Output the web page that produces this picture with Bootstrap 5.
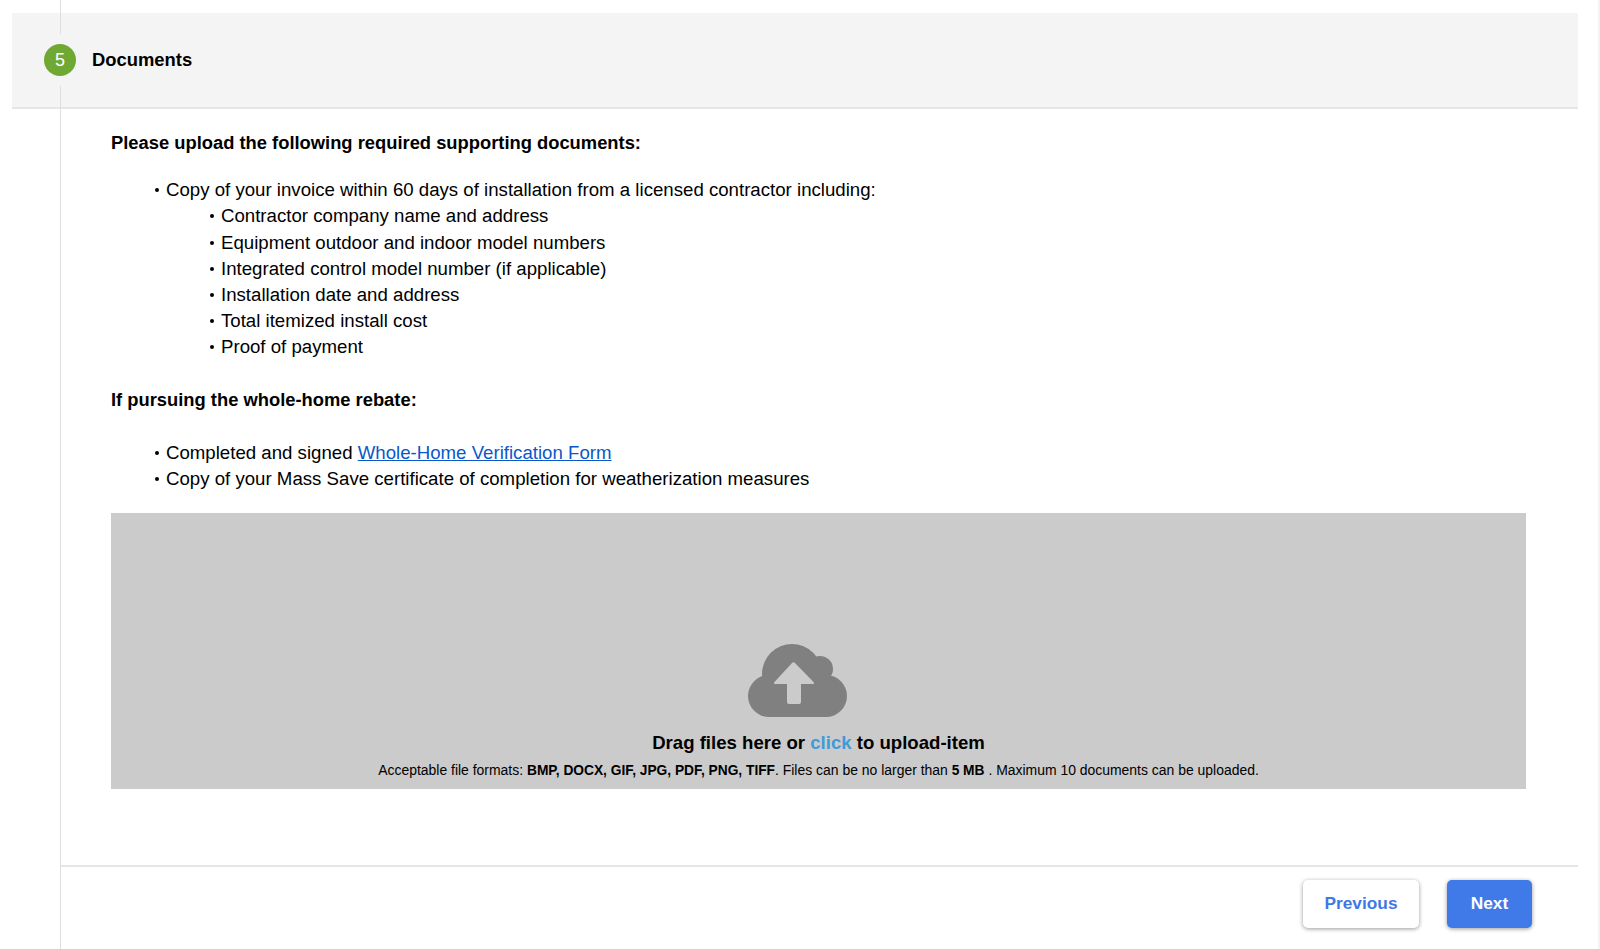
<!DOCTYPE html>
<html lang="en">
<head>
<meta charset="utf-8">
<title>Documents</title>
<link href="https://cdn.jsdelivr.net/npm/bootstrap@5.3.0/dist/css/bootstrap.min.css" rel="stylesheet">
<style>
html,body{height:949px;overflow:hidden}
body{font-family:"Liberation Sans",Arial,sans-serif;color:#000;background:#fff;font-size:18.65px;line-height:26.2px}
.page-wrap{height:949px;padding:13px 20px 0 12px;border-right:2px solid #f3f3f3;position:relative}
.rail{position:absolute;left:60px;top:0;bottom:0;width:1px;background:#dedede;z-index:1}
.step-head{height:96px;background:#f4f4f4;border-bottom:2px solid #e6e6e6;padding-left:32px;position:relative}
.step-dot{width:32px;height:32px;border-radius:50%;background:#6fa933;color:#fff;font-size:18px;box-shadow:0 0 0 10px #f4f4f4;z-index:2}
.step-title{font-weight:700;font-size:18.4px;margin-left:16px}
.step-body{margin-left:48px;padding:21px 52px 0 51px;position:relative}
.doc-heading{font-weight:700;font-size:18.35px;margin:0}
.doc-list{list-style:none;margin:0;padding:0}
.doc-list li{position:relative}
.doc-list li::before{content:"";position:absolute;left:-11px;top:11px;width:4px;height:4px;border-radius:50%;background:#000}
.doc-outer{padding-left:55px}
.doc-inner{padding-left:55px}
.gap-first{margin-top:21px}
.gap-second{margin-top:27px}
.gap-heading{margin-top:26px}
.doc-link{color:#0b57c9}
.drop-zone{height:276px;background:#cbcbcb;margin-top:21px;padding-bottom:8px}
.drop-icon{margin-right:42px}
.drop-title{font-weight:700;font-size:18.6px;line-height:26px;margin-top:12px}
.drop-title span{color:#3f9bd8}
.drop-note{font-size:13.95px;line-height:20px;margin-top:4px}
.drop-note b{font-size:13.75px}
.foot-bar{margin-left:48px;margin-top:76px;border-top:2px solid #e6e6e6;padding:13px 46px 0 0}
.act-btn{height:48px;font-size:17.3px;font-weight:700;border-radius:5px;border:0;box-shadow:0 1px 4px rgba(0,0,0,.4)}
.act-prev{width:116px;background:#fff;color:#3f78e6}
.act-next{width:85px;background:#407ae8;color:#fff;margin-left:28px}
.act-prev:hover{background:#fff;color:#3f78e6}
.act-next:hover{background:#407ae8;color:#fff}
</style>
</head>
<body>
<div class="page-wrap">
  <div class="rail"></div>
  <div class="step-head d-flex align-items-center">
    <div class="step-dot d-flex align-items-center justify-content-center position-relative">5</div>
    <div class="step-title">Documents</div>
  </div>
  <div class="step-body">
    <p class="doc-heading">Please upload the following required supporting documents:</p>
    <ul class="doc-list doc-outer gap-first mb-0">
      <li>Copy of your invoice within 60 days of installation from a licensed contractor including:
        <ul class="doc-list doc-inner">
          <li>Contractor company name and address</li>
          <li>Equipment outdoor and indoor model numbers</li>
          <li>Integrated control model number (if applicable)</li>
          <li>Installation date and address</li>
          <li>Total itemized install cost</li>
          <li>Proof of payment</li>
        </ul>
      </li>
    </ul>
    <p class="doc-heading gap-heading">If pursuing the whole-home rebate:</p>
    <ul class="doc-list doc-outer gap-second mb-0">
      <li>Completed and signed <a class="doc-link" href="#">Whole-Home Verification Form</a></li>
      <li>Copy of your Mass Save certificate of completion for weatherization measures</li>
    </ul>
    <div class="drop-zone d-flex flex-column justify-content-end align-items-center text-center">
      <svg class="drop-icon" width="100" height="74" viewBox="0 0 100 74" aria-hidden="true">
        <g fill="#808080">
          <circle cx="44" cy="30" r="30"/>
          <circle cx="72" cy="25" r="13"/>
          <circle cx="21" cy="52" r="21"/>
          <circle cx="78" cy="52" r="21"/>
          <rect x="21" y="40" width="57" height="33"/>
        </g>
        <path fill="#cbcbcb" d="M44 19Q45.500 17.500 47 19L65.500 38Q67 40 64.500 40H53V58Q53 60 51 60H41Q39 60 39 58V40H27.500Q25 40 26.500 38Z"/>
      </svg>
      <div class="drop-title">Drag files here or <span>click</span> to upload-item</div>
      <div class="drop-note">Acceptable file formats: <b>BMP, DOCX, GIF, JPG, PDF, PNG, TIFF</b>. Files can be no larger than <b>5 MB</b> . Maximum 10 documents can be uploaded.</div>
    </div>
  </div>
  <div class="foot-bar d-flex justify-content-end">
    <button type="button" class="btn act-btn act-prev">Previous</button>
    <button type="button" class="btn act-btn act-next">Next</button>
  </div>
</div>
<script src="https://cdn.jsdelivr.net/npm/bootstrap@5.3.0/dist/js/bootstrap.bundle.min.js"></script>
</body>
</html>
